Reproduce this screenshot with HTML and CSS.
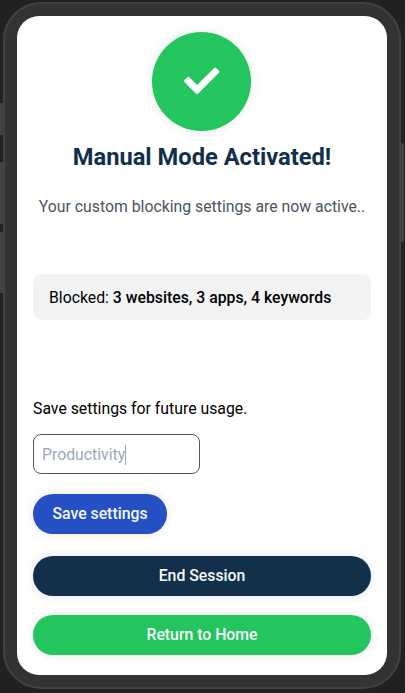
FILE: index.html
```html
<!DOCTYPE html>
<html lang="en">
<head>
<meta charset="utf-8">
<title>Manual Mode</title>
<link rel="stylesheet" href="styles.css">
</head>
<body>
<div class="phone">
  <span class="key key-mute"></span>
  <span class="key key-up"></span>
  <span class="key key-down"></span>
  <span class="key key-power"></span>
  <main class="screen">
    <div class="badge">
      <svg viewBox="0 0 99 99" width="99" height="99" aria-hidden="true"><path d="M33.5 49.1 L36.3 46.3 L45 54.9 L63.2 37 L66 39.8 L45 60.8 Z" fill="#fff" stroke="#fff" stroke-width="2.8" stroke-linejoin="round"/></svg>
    </div>
    <h1 class="title">Manual Mode Activated!</h1>
    <p class="subtitle">Your custom blocking settings are now active..</p>
    <div class="summary">Blocked: <strong>3 websites, 3 apps, 4 keywords</strong></div>
    <p class="label">Save settings for future usage.</p>
    <div class="field"><span>Productivity</span><i class="caret"></i></div>
    <button class="btn save">Save settings</button>
    <button class="btn end">End Session</button>
    <button class="btn home">Return to Home</button>
  </main>
</div>
</body>
</html>
```
FILE: styles.css
```css
* { box-sizing: border-box; }
body {
  margin: 0;
  height: 693px;
  padding: 2px 4px 4px 3px;
  background: #212121;
  font-family: Roboto, "Liberation Sans", sans-serif;
  font-size: 15.8px;
  line-height: 24px;
  color: #000;
  overflow: hidden;
}
.phone {
  position: relative;
  width: 398px;
  height: 687px;
  padding: 12px;
  border: 2px solid #424242;
  border-radius: 38px;
  background: #333;
}
.key {
  position: absolute;
  left: -5px;
  width: 3px;
  background: #424242;
}
.key-mute { top: 99px; height: 32px; }
.key-up { top: 158px; height: 62px; }
.key-down { top: 228px; height: 61px; }
.key-power { left: auto; right: -5px; top: 139px; height: 99px; border-radius: 0 2px 2px 0; }
.screen {
  display: flex;
  flex-direction: column;
  align-items: flex-start;
  height: 659px;
  padding: 16px;
  border-radius: 22px;
  background: #fff;
}
.badge {
  align-self: center;
  width: 99px;
  height: 99px;
  margin-right: 1px;
  border-radius: 50%;
  background: #24c55f;
  box-shadow: 0 0 12px rgba(0, 0, 0, .09);
}
.badge svg { display: block; }
.title {
  align-self: center;
  margin: 10px 0 0;
  font-size: 23.7px;
  line-height: 32px;
  font-weight: 700;
  color: #12304a;
  white-space: nowrap;
}
.subtitle {
  align-self: center;
  margin: 22px 0 0;
  color: #4b5563;
  white-space: nowrap;
}
.summary {
  width: 338px;
  height: 46px;
  margin-top: 55px;
  padding: 12px 16px 10px;
  border-radius: 8px;
  background: #f2f3f5;
}
.summary strong { font-weight: 500; }
.label { margin: 77px 0 0; }
.field {
  display: flex;
  align-items: center;
  width: 167px;
  height: 40px;
  margin-top: 13px;
  padding: 1px 8px 0;
  border: 1px solid #555;
  border-radius: 8px;
  color: #9aa8bc;
}
.caret { width: 1px; height: 20px; background: #9aa8bc; }
.btn {
  height: 40px;
  padding: 0;
  border: 0;
  border-radius: 20px;
  font: 500 15.8px/24px Roboto, "Liberation Sans", sans-serif;
  color: #f5f8fb;
  box-shadow: 0 0 10px rgba(0, 0, 0, .11);
}
.save { width: 134px; margin-top: 20px; background: #2550c4; }
.end { width: 338px; margin-top: 22px; background: #12304a; }
.home { width: 338px; margin-top: 19px; background: #24c55f; }
```
